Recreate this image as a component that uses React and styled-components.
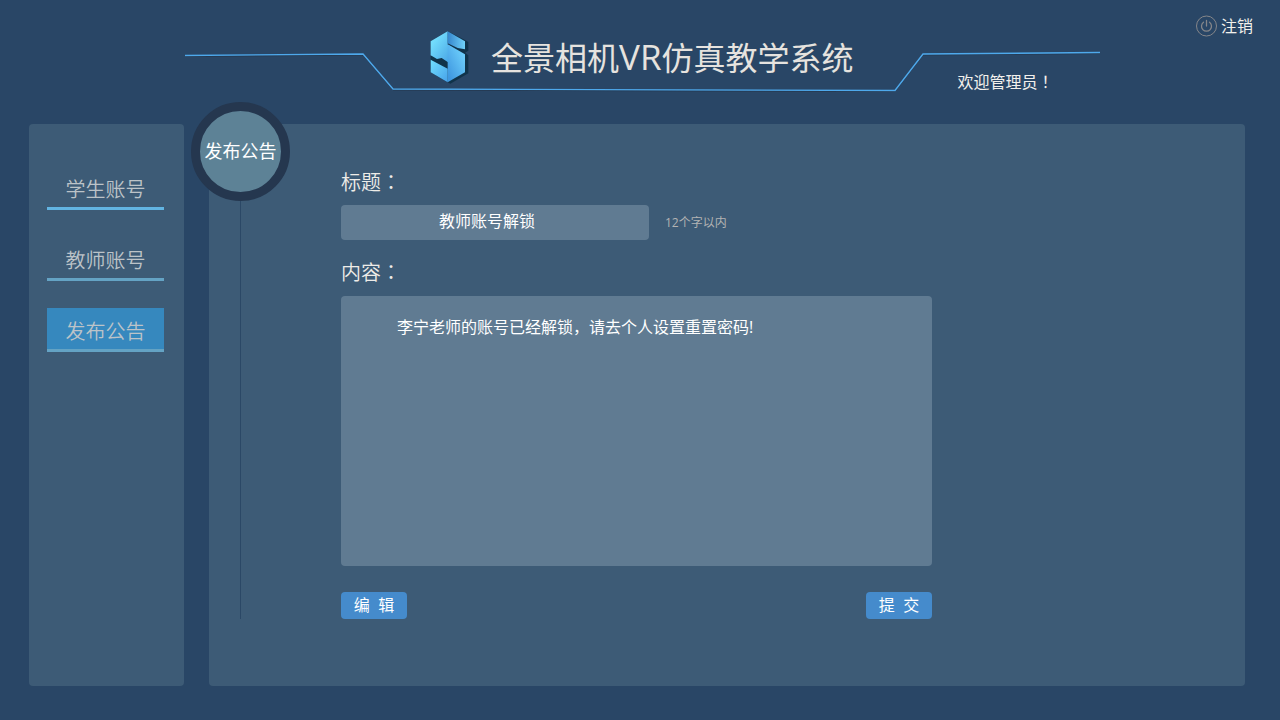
import React, { useState } from "react";
import styled, { createGlobalStyle } from "styled-components";

const GlobalStyle = createGlobalStyle`
  * {
    box-sizing: border-box;
  }
  body {
    margin: 0;
    background-color: #294666;
    color: #f2f0ec;
    font-family: "Open Sans", "Noto Sans CJK SC", sans-serif;
    font-weight: 400;
  }
  input, textarea, button {
    font-family: inherit;
    font-weight: inherit;
  }
`;

const Page = styled.div`
  min-height: 100vh;
  display: flex;
  flex-direction: column;
`;

const Header = styled.header`
  display: grid;
  grid-template-columns: 1fr 915px 1fr;
  height: 124px;
  padding-left: 5px;
`;

const Banner = styled.div`
  grid-column: 2;
  position: relative;
  display: flex;
  align-items: flex-start;
  padding: 30px 0 0 244px;
`;

const BannerLine = styled.svg`
  position: absolute;
  left: 0;
  top: 48px;
`;

const Title = styled.h1`
  margin: 0 0 0 22px;
  font-size: 32px;
  line-height: 56px;
  font-weight: 400;
  color: #e6e3df;
  white-space: nowrap;
`;

const Latin = styled.span`
  font-size: 35px;
  line-height: 1;
`;

const Welcome = styled.p`
  margin: 40px 0 0 104px;
  font-size: 16px;
  line-height: 24px;
  white-space: nowrap;
`;

// full-width punctuation centred in its box
const Mark = styled.span`
  font-family: "Noto Sans CJK TC", sans-serif;
  line-height: 1;
`;

const Logout = styled.button`
  justify-self: end;
  align-self: start;
  display: flex;
  align-items: center;
  gap: 4px;
  margin: 14px 27px 0 0;
  padding: 0;
  border: none;
  background: none;
  color: #f2f0ec;
  font-size: 16px;
  line-height: 24px;
  cursor: pointer;
`;

const Content = styled.div`
  flex: 1;
  display: flex;
  gap: 25px;
  padding: 0 35px 34px 29px;
`;

const Sidebar = styled.nav`
  width: 155px;
  display: flex;
  flex-direction: column;
  gap: 27px;
  padding: 42px 20px 42px 18px;
  border-radius: 4px;
  background-color: #3d5b76;
`;

const NavItem = styled.a`
  height: 44px;
  border-bottom: 3px solid ${(props) => (props.$bright ? "#62b4e2" : "#64a3c4")};
  background-color: ${(props) => (props.$active ? "#3688be" : "transparent")};
  color: #bcc3c8;
  font-size: 20px;
  line-height: 48px;
  font-weight: 350;
  text-align: center;
  text-decoration: none;
`;

const Main = styled.main`
  flex: 1;
  position: relative;
  display: flex;
  padding: 0 40px 67px 0;
  border-radius: 4px;
  background-color: #3d5b76;
`;

const Badge = styled.h2`
  position: absolute;
  left: -18px;
  top: -22px;
  width: 99px;
  height: 99px;
  margin: 0;
  border: 9px solid #25374f;
  border-radius: 50%;
  background-color: #5d8296;
  color: #ffffff;
  font-size: 18px;
  line-height: 81px;
  font-weight: 400;
  text-align: center;
  white-space: nowrap;
`;

const Timeline = styled.div`
  width: 101px;
  margin-left: 31px;
  border-left: 1px solid #2b4866;
`;

const Form = styled.form`
  flex: 1;
  max-width: 591px;
  display: flex;
  flex-direction: column;
  padding-top: 45px;
`;

const Label = styled.label`
  font-size: 20px;
  line-height: 28px;
  font-weight: 350;
  color: #eeece8;
`;

const TitleRow = styled.div`
  display: flex;
  align-items: center;
  gap: 16px;
  margin: 8px 0 19px;
`;

const Input = styled.input`
  width: 308px;
  height: 35px;
  padding: 0 16px 6px 0;
  border: none;
  border-radius: 4px;
  background-color: #607b92;
  color: #ffffff;
  font-size: 16px;
  text-align: center;
`;

const Hint = styled.span`
  font-size: 12px;
  line-height: 20px;
  color: #b3b3b3;
`;

const TextArea = styled.textarea`
  height: 270px;
  margin: 9px 0 26px;
  padding: 19px 56px;
  border: none;
  border-radius: 4px;
  background-color: #607b92;
  color: #ffffff;
  font-size: 16px;
  line-height: 24px;
  resize: none;
`;

const Actions = styled.div`
  display: flex;
  justify-content: space-between;
`;

const Button = styled.button`
  width: 66px;
  height: 27px;
  padding: 0;
  border: none;
  border-radius: 4px;
  background-color: #458bcc;
  color: #ffffff;
  font-size: 16px;
  line-height: 27px;
  white-space: pre;
  cursor: pointer;
`;

const Logo = () => (
  <svg width="40" height="54" viewBox="42 28 120 162" aria-hidden="true">
    <defs>
      <linearGradient id="face" gradientUnits="userSpaceOnUse" x1="50" y1="70" x2="125" y2="125">
        <stop offset="0" stopColor="#72dcfc" />
        <stop offset="1" stopColor="#3f98e0" />
      </linearGradient>
      <linearGradient id="arm" gradientUnits="userSpaceOnUse" x1="98" y1="60" x2="150" y2="60">
        <stop offset="0" stopColor="#3585cc" />
        <stop offset="1" stopColor="#6fd2fa" />
      </linearGradient>
      <linearGradient id="side" gradientUnits="userSpaceOnUse" x1="90" y1="145" x2="150" y2="115">
        <stop offset="0" stopColor="#3f98e0" />
        <stop offset="1" stopColor="#6acbfa" />
      </linearGradient>
      <linearGradient id="foot" gradientUnits="userSpaceOnUse" x1="47" y1="130" x2="98" y2="170">
        <stop offset="0" stopColor="#6ddafd" />
        <stop offset="1" stopColor="#4ba8ec" />
      </linearGradient>
    </defs>
    <path
      d="M98 32L150 58L160 64V90L150 96L160 104V158L106 189L90 180L47 155V106H98Z"
      fill="#10334a"
    />
    <path d="M98 32L47 62V104L66 115L80 112L98 124L112 130V80L98 72Z" fill="url(#face)" />
    <path d="M98 32L150 62V86L128 82L98 68Z" fill="url(#arm)" />
    <path d="M98 71L150 101V155L98 185V116Z" fill="url(#side)" />
    <path d="M47 117L98 144V185L47 155Z" fill="url(#foot)" />
  </svg>
);

const PowerIcon = () => (
  <svg width="21" height="22" viewBox="0 0 21 22" fill="none" stroke="#85868a" aria-hidden="true">
    <circle cx="10.5" cy="11" r="10" />
    <path d="M10.5 5.5V11M7.5 7.2A5 5 0 1 0 13.5 7.2" strokeWidth="1.3" strokeLinecap="round" />
  </svg>
);

const App = () => {
  const [title, setTitle] = useState("教师账号解锁");
  const [content, setContent] = useState(
    "李宁老师的账号已经解锁，请去个人设置重置密码!"
  );

  const handleSubmit = (e) => {
    e.preventDefault();
  };

  return (
    <Page>
      <GlobalStyle />
      <Header>
        <Banner>
          <BannerLine width="915" height="46" fill="none" aria-hidden="true">
            <path
              d="M0 8.5L178 7L208 42L710 43.5L738 7L915 5.5"
              stroke="#25384f"
            />
            <path
              d="M0 7.5L178 6L208 41L710 42.5L738 6L915 4.5"
              stroke="#4ea9ec"
              strokeWidth="1.4"
            />
          </BannerLine>
          <Logo />
          <Title>
            全景相机<Latin>VR</Latin>仿真教学系统
          </Title>
          <Welcome>
            欢迎管理员<Mark>！</Mark>
          </Welcome>
        </Banner>
        <Logout type="button">
          <PowerIcon />
          注销
        </Logout>
      </Header>
      <Content>
        <Sidebar>
          <NavItem href="#students" $bright>
            学生账号
          </NavItem>
          <NavItem href="#teachers">教师账号</NavItem>
          <NavItem href="#notice" $active>
            发布公告
          </NavItem>
        </Sidebar>
        <Main>
          <Timeline />
          <Badge>发布公告</Badge>
          <Form onSubmit={handleSubmit}>
            <Label htmlFor="title">
              标题<Mark>：</Mark>
            </Label>
            <TitleRow>
              <Input
                id="title"
                maxLength={12}
                value={title}
                onChange={(e) => setTitle(e.target.value)}
              />
              <Hint>12个字以内</Hint>
            </TitleRow>
            <Label htmlFor="content">
              内容<Mark>：</Mark>
            </Label>
            <TextArea
              id="content"
              value={content}
              onChange={(e) => setContent(e.target.value)}
            />
            <Actions>
              <Button type="button">编  辑</Button>
              <Button type="submit">提  交</Button>
            </Actions>
          </Form>
        </Main>
      </Content>
    </Page>
  );
};

export default App;
